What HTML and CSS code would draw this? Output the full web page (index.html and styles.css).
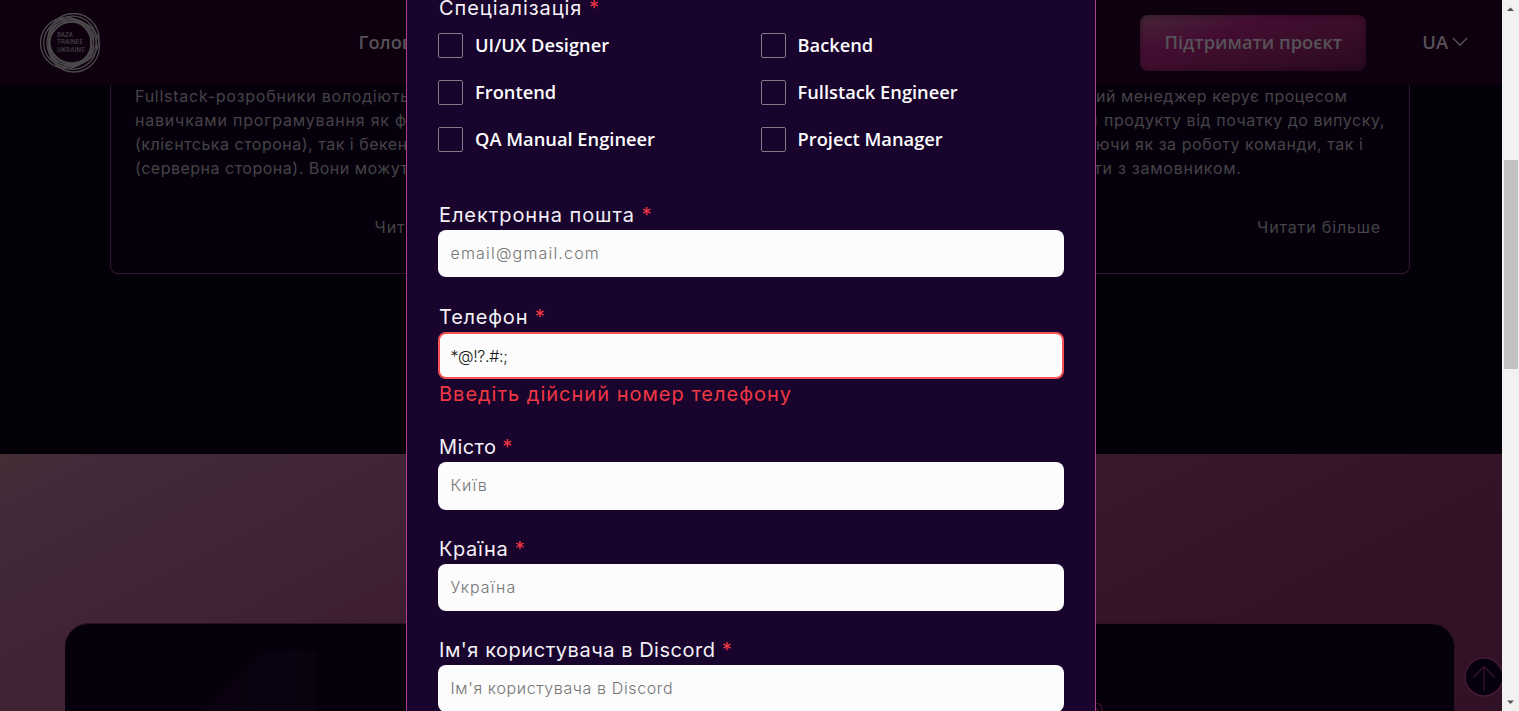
FILE: index.html
```
<!DOCTYPE html>
<html lang="uk">
<head>
<meta charset="utf-8">
<title>Baza Trainee Ukraine</title>
<link rel="stylesheet" href="styles.css">
</head>
<body>
<div class="window">
  <div class="page">
    <header class="header">
      <svg class="logo" viewBox="0 0 60 60" width="60" height="60">
        <g fill="none" stroke="#4b484b" stroke-width="1.3">
          <circle cx="33.5" cy="26" r="25.500"/>
          <circle cx="32.600" cy="27" r="23.800"/>
          <circle cx="31.700" cy="28" r="22"/>
          <circle cx="26" cy="30" r="25.500"/>
          <circle cx="27.500" cy="30" r="23.800"/>
          <circle cx="29" cy="30" r="22"/>
          <circle cx="33.900" cy="33.500" r="25.500"/>
          <circle cx="32.800" cy="32.500" r="23.800"/>
          <circle cx="31.500" cy="31" r="22"/>
        </g>
        <g class="logo-text" fill="#4b484b">
          <text x="17" y="23.5" textLength="16">BAZA</text>
          <text x="17" y="31.2" textLength="26">TRAINEE</text>
          <text x="17" y="38.900" textLength="28">UKRAINE</text>
        </g>
      </svg>
      <nav class="nav">Головна</nav>
      <div class="actions">
        <div class="support">Підтримати проєкт</div>
        <div class="lang">UA
          <svg width="16" height="10" viewBox="0 0 16 10"><path d="M1 1l7 7.2L15 1" fill="none" stroke="#575257" stroke-width="1.3"/></svg>
        </div>
      </div>
    </header>
    <section class="roles">
      <article class="role">
        <p class="line l1">Fullstack-розробники володіють</p>
        <p class="line l2">навичками програмування як фронтенд</p>
        <p class="line l3">(клієнтська сторона), так і бекенд</p>
        <p class="line l3">(серверна сторона). Вони можуть</p>
        <div class="more">Читати більше</div>
      </article>
      <article class="role">
        <p class="line r1"><span class="lead">Проєктн</span>ий менеджер керує процесом</p>
        <p class="line r2"><span class="lead wide">розробки</span>продукту від початку до випуску,</p>
        <p class="line r2"><span class="lead">відповіда</span>ючи як за роботу команди, так і</p>
        <p class="line r4"><span class="lead narrow">співпрац</span>ти з замовником.</p>
        <div class="more">Читати більше</div>
      </article>
    </section>
    <section class="steps">
      <div class="step-card">
        <svg class="digit" width="130" height="62" viewBox="0 0 130 62">
          <defs><linearGradient id="dg" x1="0" x2="1"><stop offset="0" stop-color="#0b000f"/><stop offset="1" stop-color="#090310"/></linearGradient></defs>
          <path d="M79 0H130V62H12Z" fill="url(#dg)"/>
        </svg>
        <svg class="ornament" width="16" height="12" viewBox="0 0 16 12"><g fill="none" stroke="#3a0f2b" stroke-width="1.6"><path d="M0 0a6 7 0 0 1 5 12M0 5a3 4 0 0 1 2 7M9 12V9h4"/></g></svg>
      </div>
      <svg class="to-top" width="40" height="40" viewBox="0 0 40 40">
        <circle cx="20" cy="20" r="19" fill="#06000e" stroke="#431a35" stroke-width="1.6"/>
        <path d="M20 34V9.500M9.500 20.500L20 9.500L30.500 20.500" fill="none" stroke="#351028" stroke-width="1.4"/>
      </svg>
    </section>
    <div class="modal">
      <div class="label spec">Спеціалізація <i>*</i></div>
      <div class="checks">
        <div class="check"><span class="box"></span>UI/UX Designer</div>
        <div class="check"><span class="box"></span>Backend</div>
        <div class="check"><span class="box"></span>Frontend</div>
        <div class="check"><span class="box"></span>Fullstack Engineer</div>
        <div class="check"><span class="box"></span>QA Manual Engineer</div>
        <div class="check"><span class="box"></span>Project Manager</div>
      </div>
      <div class="field email">
        <div class="label">Електронна пошта <i>*</i></div>
        <div class="input">email@gmail.com</div>
      </div>
      <div class="field phone">
        <div class="label">Телефон <i>*</i></div>
        <div class="input invalid">*@!?.#:;</div>
        <div class="error">Введіть дійсний номер телефону</div>
      </div>
      <div class="field city">
        <div class="label">Місто <i>*</i></div>
        <div class="input">Київ</div>
      </div>
      <div class="field country">
        <div class="label">Країна <i>*</i></div>
        <div class="input">Україна</div>
      </div>
      <div class="field discord">
        <div class="label">Ім'я користувача в Discord <i>*</i></div>
        <div class="input">Ім'я користувача в Discord</div>
      </div>
    </div>
  </div>
  <div class="scrollbar">
    <svg width="17" height="17" viewBox="0 0 17 17"><path d="M5 11L8.500 7.500L12 11Z" fill="#505050"/></svg>
    <div class="thumb"></div>
    <svg width="17" height="17" viewBox="0 0 17 17"><path d="M5 6.500H12L8.500 10Z" fill="#505050"/></svg>
  </div>
</div>
</body>
</html>
```
FILE: styles.css
```
* { box-sizing: border-box; }
body { margin: 0; background: #030007; font-family: Inter, "Open Sans", sans-serif; }
p { margin: 0; }
.window { display: flex; width: 1519px; height: 711px; overflow: hidden; }
.page { position: relative; flex: 1; height: 711px; overflow: hidden; background: #030007; }

.header {
  display: flex; align-items: center; height: 85px; padding: 0 34px 1px 40px;
  background: #0e000f; color: #575257;
  font: 600 18.3px/25px "Open Sans", sans-serif;
}
.logo { margin-top: 1.500px; }
.logo-text { font: 500 6px Inter, sans-serif; }
.nav { margin-left: 258.500px; padding-bottom: 1px; }
.actions { display: flex; align-items: center; gap: 56px; margin-left: auto; }
.support {
  width: 226px; height: 56px; margin-top: 1px; line-height: 54px; text-align: center; border-radius: 8px;
  background: linear-gradient(165deg, #452638 0%, #440d32 33%, #3a0d29 60%, #290820 100%);
  box-shadow: inset 0 0 5px 1px rgba(20, 0, 18, .35);
}
.lang { display: flex; align-items: center; gap: 4px; padding-bottom: 1px; }

.roles { display: flex; justify-content: space-between; height: 188.500px; margin: 0 92px 0 109.500px; }
.role {
  width: 418px; padding: 0 24px 0 24.500px; background: #05000c;
  border: 1px solid #3a1234; border-top: 0; border-radius: 0 0 8px 8px;
  color: #454446;
}
.line { position: relative; top: -1px; font-size: 16px; line-height: 24px; white-space: nowrap; }
.l1 { letter-spacing: .74px; }
.l2 { letter-spacing: .79px; }
.l3, .r1 { letter-spacing: .5px; }
.r2 { letter-spacing: .54px; }
.r4 { letter-spacing: .75px; }
.lead { display: inline-block; width: 78.500px; overflow: hidden; vertical-align: top; }
.lead.wide { width: 86.500px; direction: rtl; padding-right: 6px; }
.lead.narrow { width: 76.500px; }
.more { margin: 34px 4px 0 0; text-align: right; font-size: 16px; line-height: 24px; letter-spacing: .86px; }

.steps {
  position: relative; height: 600px; margin-top: 180px; padding: 169px 47px 0 65px;
  background: linear-gradient(153deg, #432f34 0%, #412a3a 4%, #402435 17%, #3c1a2f 34%, #351329 54%, #301125 72%, #2c1024 100%);
}
.step-card { position: relative; height: 431px; border: 1px solid #2c1023; border-left: 0; border-radius: 24px; background: #06000c; }
.digit { position: absolute; left: 122px; top: 27px; }
.ornament { position: absolute; left: 1030px; top: 79px; }
.to-top { position: absolute; left: 1464px; top: 203px; }

.modal {
  position: absolute; left: 406px; top: -6px; width: 690px; height: 730px; padding: 0 31px;
  background: #18042d; border: solid #b03f8d; border-width: 0 1px;
}
.label { height: 28px; padding-left: 1px; font-size: 20px; line-height: 26.500px; color: #f3f1f5; white-space: nowrap; }
.label i { font-style: normal; color: #f03744; }
.spec { line-height: 28px; letter-spacing: .92px; }
.checks { display: grid; grid-template-columns: 322.500px 1fr; row-gap: 22.200px; margin-top: 10.500px; }
.check { display: flex; align-items: center; gap: 12px; height: 25px; padding-bottom: 2px; color: #fcfcfc; font: 600 18.3px/25px "Open Sans", sans-serif; }
.box { position: relative; top: 1px; width: 25px; height: 25px; border: 1px solid #827888; border-radius: 2px; }
.field { height: 101.400px; }
.email { margin-top: 50.300px; letter-spacing: .92px; }
.phone { height: 130.800px; letter-spacing: .78px; }
.city { letter-spacing: .4px; }
.country { letter-spacing: .62px; }
.discord { letter-spacing: .53px; }
.input {
  height: 47.300px; padding-left: 12.500px; border-radius: 8px; background: #fcfcfc; color: #757575;
  font-size: 16px; font-weight: 300; line-height: 47.600px; letter-spacing: .62px;
}
.email .input { letter-spacing: 1.180px; }
.city .input, .country .input { letter-spacing: 1.050px; }
.field .invalid { border: 2px solid #f85155; padding-left: 10.500px; line-height: 44px; letter-spacing: -.340px; color: #151515; }
.error { padding-left: 1px; font-size: 20px; line-height: 30px; letter-spacing: 1px; color: #f03744; }

.scrollbar { display: flex; flex-direction: column; width: 17px; background: #f1f1f1; }
.thumb { width: 14px; height: 209px; margin: 143px 0 325px 2px; background: #c1c1c1; }
```
